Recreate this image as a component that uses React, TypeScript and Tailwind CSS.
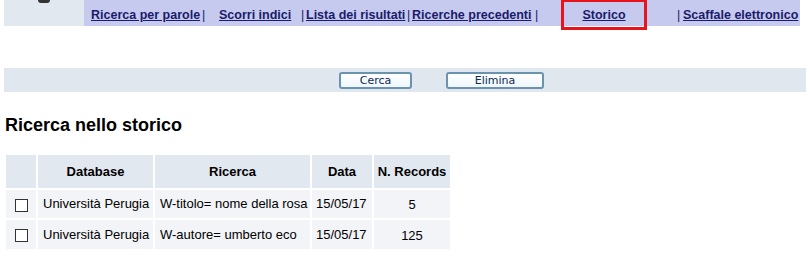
import React from "react";

const rows = [
  { db: "Università Perugia", q: "W-titolo= nome della rosa", data: "15/05/17", n: "5" },
  { db: "Università Perugia", q: "W-autore= umberto eco", data: "15/05/17", n: "125" },
];

function NavLink({ label, w, ml }: { label: string; w: string; ml: string }) {
  return (
    <span className={`inline-block whitespace-nowrap ${w} ${ml}`}>
      <a className="underline text-[#1b1b6b]">{label}</a>
    </span>
  );
}

function Sep({ ml }: { ml: string }) {
  return <span className={`inline-block w-[3px] text-[#1b1b6b] font-normal ${ml}`}>|</span>;
}

export default function App() {
  return (
    <div className="w-[806px] h-[257px] bg-white overflow-hidden font-['Liberation_Sans',Arial,sans-serif] text-black">
      {/* barra di navigazione */}
      <div className="flex h-[26px] pr-[6px]">
        <div className="w-[80px] ml-[4px] bg-[#e2e8f0] relative">
          <div className="absolute left-[34px] top-0 w-[12px] h-[3px] bg-[#333] rounded-b-[4px]" />
        </div>
        <div className="flex-1 bg-[#c5caee] flex items-center text-[12.5px] font-bold pt-[5px]">
          <NavLink label="Ricerca per parole" w="w-[107px]" ml="ml-[7px]" />
          <Sep ml="ml-[4px]" />
          <NavLink label="Scorri indici" w="w-[69px]" ml="ml-[14px]" />
          <Sep ml="ml-[13px]" />
          <NavLink label="Lista dei risultati" w="w-[98px]" ml="ml-[2px]" />
          <Sep ml="ml-[3px]" />
          <NavLink label="Ricerche precedenti" w="w-[118px]" ml="ml-[2px]" />
          <Sep ml="ml-[5px]" />
          <div className="ml-[23px] w-[86px] h-[31px] -mt-[6px] self-start border-[3px] border-[#e8141b] flex items-center justify-center pt-[2px]">
            <a className="underline text-[#1b1b6b]">Storico</a>
          </div>
          <Sep ml="ml-[30px]" />
          <NavLink label="Scaffale elettronico" w="w-[113px]" ml="ml-[3px]" />
        </div>
      </div>

      {/* pulsanti */}
      <div className="mt-[42px] ml-[4px] h-[24px] bg-[#e1e7ef] flex items-center pl-[335px] gap-[34px] font-['DejaVu_Sans',Verdana,sans-serif] text-[11px] text-[#0a2c55]">
        <button className="w-[73px] h-[17px] mt-[1px] rounded-[3px] border-2 border-[#6a94ae] bg-gradient-to-b from-white to-[#eef6fb] leading-none">
          Cerca
        </button>
        <button className="w-[98px] h-[17px] mt-[1px] rounded-[3px] border-2 border-[#6a94ae] bg-gradient-to-b from-white to-[#eef6fb] leading-none">
          Elimina
        </button>
      </div>

      <h2 className="ml-[5px] mt-[24px] text-[18px] font-bold leading-none">Ricerca nello storico</h2>

      <table className="mt-[19px] ml-[4px] table-fixed w-[448px] border-separate border-spacing-[2px] text-[13px]">
        <colgroup>
          <col className="w-[30px]" />
          <col className="w-[115px]" />
          <col className="w-[155px]" />
          <col className="w-[60px]" />
          <col className="w-[76px]" />
        </colgroup>
        <thead>
          <tr className="h-[33px]">
            <th className="bg-[#e2e8f0]" />
            <th className="bg-[#e2e8f0] font-bold">Database</th>
            <th className="bg-[#e2e8f0] font-bold">Ricerca</th>
            <th className="bg-[#e2e8f0] font-bold">Data</th>
            <th className="bg-[#e2e8f0] font-bold whitespace-nowrap">N. Records</th>
          </tr>
        </thead>
        <tbody>
          {rows.map((r, i) => (
            <tr key={i} className={i === 0 ? "h-[28px]" : "h-[29px]"}>
              <td className="bg-[#f2f4f7] text-center">
                <span className="inline-block w-[13px] h-[13px] border border-[#333] bg-white align-middle mt-[1px]" />
              </td>
              <td className="bg-[#f2f4f7] pl-[5px] whitespace-nowrap overflow-hidden">{r.db}</td>
              <td className="bg-[#f2f4f7] pl-[5px] whitespace-nowrap overflow-hidden">{r.q}</td>
              <td className="bg-[#f2f4f7] pl-[4px] whitespace-nowrap overflow-hidden">{r.data}</td>
              <td className="bg-[#f2f4f7] text-center pt-[2px]">{r.n}</td>
            </tr>
          ))}
        </tbody>
      </table>
    </div>
  );
}
